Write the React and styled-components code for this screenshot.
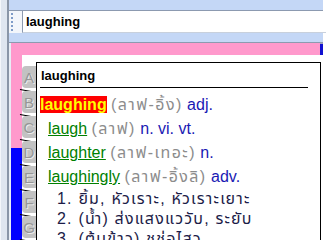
import React from "react";
import styled, { createGlobalStyle } from "styled-components";

const Global = createGlobalStyle`
  html, body { margin: 0; padding: 0; background: #fff; }
  body { font-family: "Liberation Sans", "Noto Sans Thai", "Noto Sans", "DejaVu Sans", sans-serif; }
`;

const Window = styled.div`
  width: 326px;
  height: 240px;
  overflow: hidden;
  display: flex;
  background: #fff;
`;

const LeftStrip = styled.div`
  width: 9px;
  flex: none;
  background: #dfe6f0;
  border-left: 1px solid #f4f7fb;
  border-right: 2px solid #8a96a8;
  box-sizing: border-box;
`;

const Main = styled.div`
  flex: 1;
  display: flex;
  flex-direction: column;
  min-width: 0;
`;

const Band = styled.div`
  height: ${(p) => p.h}px;
  flex: none;
  box-sizing: border-box;
  background: #c4d7f6;
  border-bottom: 1px solid #8c9ab0;
  margin-right: 3px;
`;

const SearchRow = styled.div`
  height: 22px;
  flex: none;
  display: flex;
  align-items: stretch;
  background: #f3f6fb;
`;

const Grip = styled.div`
  width: 2px;
  margin: 2px 9px 2px 2px;
  background: repeating-linear-gradient(to bottom, #7f9cc8 0 2px, transparent 2px 4px);
`;

const SearchInput = styled.div`
  flex: 1;
  background: #fff;
  border-left: 1px solid #8c9ab0;
  border-bottom: 1px solid #c8d0dc;
  font: bold 13px "Liberation Sans", sans-serif;
  color: #000;
  line-height: 21px;
  padding-left: 3px;
`;

const Body = styled.div`
  flex: 1;
  display: flex;
  min-height: 0;
`;

const Rail = styled.div`
  width: 2px;
  flex: none;
  background: #e8eef6;
`;

const ColorRail = styled.div`
  width: 11px;
  flex: none;
  background: linear-gradient(to bottom, #ff99cc 0 105px, #0000ff 105px);
`;

const Pane = styled.div`
  flex: 1;
  display: flex;
  flex-direction: column;
  min-width: 0;
`;

const TopBar = styled.div`
  height: 12px;
  flex: none;
  display: flex;
`;

const PinkBar = styled.div`
  flex: 1;
  background: #ff99cc;
`;

const BlueNub = styled.div`
  width: 3px;
  background: #1010d0;
  border-top: 1px solid #a0a0c0;
  margin-right: 3px;
`;

const Page = styled.div`
  flex: 1;
  display: flex;
  padding-top: 7px;
  min-height: 0;
`;

const Tabs = styled.div`
  width: 14px;
  flex: none;
  display: flex;
  flex-direction: column;
  padding-top: 3px;
`;

const Tab = styled.div`
  position: relative;
  height: 25px;
  flex: none;
  display: flex;
  align-items: center;
  justify-content: center;
  font: 15px "Liberation Sans", sans-serif;
  color: #969696;
  text-shadow: 1px 1px 0 #ececec;
  &::before {
    content: "";
    position: absolute;
    left: 0;
    right: 0;
    top: 1px;
    bottom: 2px;
    background: #c2c2c2;
    border-radius: 4px 0 0 4px;
    z-index: 0;
  }
  &::after {
    content: "";
    position: absolute;
    left: -2px;
    width: 17px;
    bottom: 0;
    height: 1px;
    background: #000;
    transform: rotate(10deg);
    transform-origin: left center;
  }
  span { position: relative; z-index: 1; }
`;

const Box = styled.div`
  flex: 1;
  border: 1px solid #000;
  border-bottom: none;
  margin-right: 5px;
  padding: 5px 0 0 3px;
  min-width: 0;
`;

const Heading = styled.div`
  font: bold 13px "Liberation Sans", sans-serif;
  line-height: 16px;
  padding: 0 0 3px 1px;
  border-bottom: 1px solid #000;
  margin-right: 12px;
`;

const Entries = styled.div`
  padding-top: 5px;
  font-size: 16px;
`;

const Line = styled.div`
  height: ${(p) => p.h || 24}px;
  line-height: ${(p) => p.h || 24}px;
  padding-left: ${(p) => p.indent || 0}px;
  white-space: nowrap;
  color: #1c1c48;
  letter-spacing: ${(p) => (p.h ? "1.2px" : "0")};
`;

const Hit = styled.span`
  font-weight: bold;
  color: #ffff00;
  background: #ff0000;
`;

const Word = styled.span`
  color: #008000;
  text-decoration: underline;
`;

const Pron = styled.span`
  color: #8c8c8c;
  letter-spacing: 1.4px;
`;

const Pos = styled.span`
  color: #1a1ab4;
`;

const entries = [
  { word: "laughing", hit: true, pron: "(ลาฟ-อิ้ง)", pos: "adj." },
  { word: "laugh", pron: "(ลาฟ)", pos: "n. vi. vt." },
  { word: "laughter", pron: "(ลาฟ-เทอะ)", pos: "n." },
  { word: "laughingly", pron: "(ลาฟ-อิ้งลิ)", pos: "adv." },
];

const meanings = [
  "1. ยิ้ม, หัวเราะ, หัวเราะเยาะ",
  "2. (น้ำ) ส่งแสงแววับ, ระยับ",
  "3. (ต้นข้าว) ชูช่อไสว",
];

const letters = ["A", "B", "C", "D", "E", "F", "G"];

export default function App() {
  return (
    <>
      <Global />
      <Window>
        <LeftStrip />
        <Main>
          <Band h={11} />
          <SearchRow>
            <Grip />
            <SearchInput>laughing</SearchInput>
          </SearchRow>
          <Band h={10} />
          <Body>
            <Rail />
            <ColorRail />
            <Pane>
              <TopBar>
                <PinkBar />
                <BlueNub />
              </TopBar>
              <Page>
                <Tabs>
                  {letters.map((l) => (
                    <Tab key={l}>
                      <span>{l}</span>
                    </Tab>
                  ))}
                </Tabs>
                <Box>
                  <Heading>laughing</Heading>
                  <Entries>
                    {entries.map((e) => (
                      <Line key={e.word} indent={e.hit ? 0 : 8}>
                        {e.hit ? <Hit>{e.word}</Hit> : <Word>{e.word}</Word>}{" "}
                        <Pron>{e.pron}</Pron> <Pos>{e.pos}</Pos>
                      </Line>
                    ))}
                    {meanings.map((m) => (
                      <Line key={m} indent={17} h={20}>
                        {m}
                      </Line>
                    ))}
                  </Entries>
                </Box>
              </Page>
            </Pane>
          </Body>
        </Main>
      </Window>
    </>
  );
}
